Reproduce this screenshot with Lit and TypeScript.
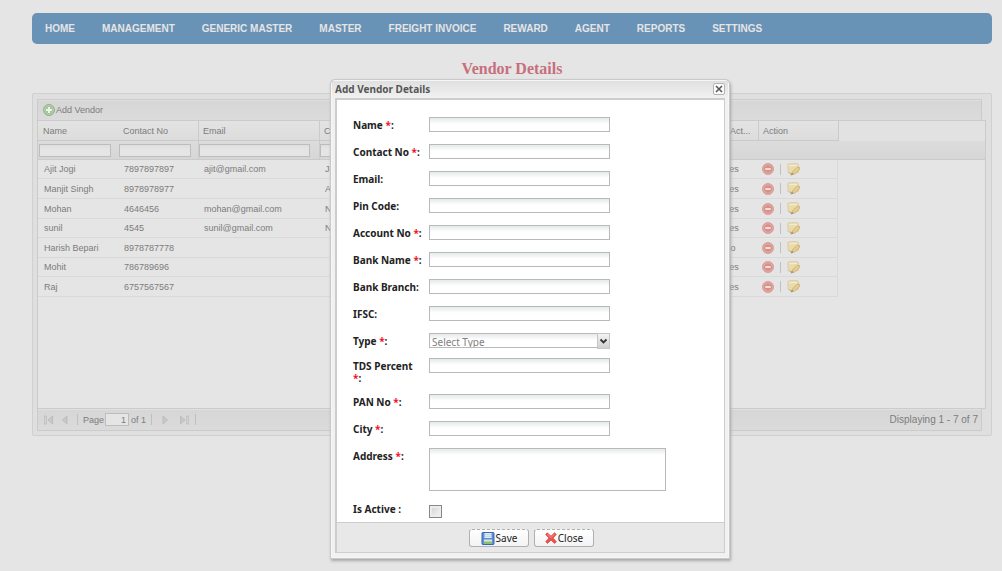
import { LitElement, html, svg, css, nothing } from "lit";
import { customElement, state } from "lit/decorators.js";

interface Vendor {
  name: string;
  contact: string;
  email: string;
  city: string;
  active: string;
}

interface Field {
  id: string;
  label: string;
  required?: boolean;
  kind?: "text" | "select" | "area" | "check";
}

const MENU = ["HOME", "MANAGEMENT", "GENERIC MASTER", "MASTER", "FREIGHT INVOICE", "REWARD", "AGENT", "REPORTS", "SETTINGS"];

const VENDORS: Vendor[] = [
  { name: "Ajit Jogi", contact: "7897897897", email: "ajit@gmail.com", city: "Ja", active: "Yes" },
  { name: "Manjit Singh", contact: "8978978977", email: "", city: "A", active: "Yes" },
  { name: "Mohan", contact: "4646456", email: "mohan@gmail.com", city: "N", active: "Yes" },
  { name: "sunil", contact: "4545", email: "sunil@gmail.com", city: "N", active: "Yes" },
  { name: "Harish Bepari", contact: "8978787778", email: "", city: "", active: "No" },
  { name: "Mohit", contact: "786789696", email: "", city: "", active: "Yes" },
  { name: "Raj", contact: "6757567567", email: "", city: "", active: "Yes" },
];

const FIELDS: Field[] = [
  { id: "name", label: "Name", required: true },
  { id: "contact", label: "Contact No", required: true },
  { id: "email", label: "Email" },
  { id: "pin", label: "Pin Code" },
  { id: "account", label: "Account No", required: true },
  { id: "bank", label: "Bank Name", required: true },
  { id: "branch", label: "Bank Branch" },
  { id: "ifsc", label: "IFSC" },
  { id: "type", label: "Type", required: true, kind: "select" },
  { id: "tds", label: "TDS Percent", required: true },
  { id: "pan", label: "PAN No", required: true },
  { id: "city", label: "City", required: true },
  { id: "address", label: "Address", required: true, kind: "area" },
  { id: "active", label: "Is Active ", kind: "check" },
];

const addIcon = html`<svg width="12" height="12" viewBox="0 0 12 12" aria-hidden="true">
  <circle cx="6" cy="6" r="5.5" fill="#a3c499" stroke="#93b28b"/>
  <circle cx="6" cy="6" r="4.4" fill="none" stroke="#b9d2b1" stroke-width=".8"/>
  <path d="M6 3v6M3 6h6" stroke="#eef2ec" stroke-width="2"/></svg>`;

const removeIcon = html`<svg width="12" height="12" viewBox="0 0 12 12" aria-hidden="true">
  <circle cx="6" cy="6" r="5.5" fill="#dc9089" stroke="#d3a39f"/>
  <circle cx="6" cy="6" r="4.3" fill="none" stroke="#e6b0aa" stroke-width=".9"/>
  <rect x="3" y="4.8" width="6" height="2.4" fill="#f2e4e3" stroke="#c97d76" stroke-width=".5"/></svg>`;

const editIcon = html`<svg width="13" height="13" viewBox="0 0 13 13" aria-hidden="true">
  <path d="M.8 1.6 2 .8 10.4.6 11.4 1.6 11.4 9.4 6 10.6 1.2 9.6z" fill="#e8dcae" stroke="#ddcaa2" stroke-width=".9"/>
  <path d="M2.2 2.6 10 2.4" stroke="#f0ebd4" stroke-width="1.4"/>
  <path d="M1 9.4 4.4 10 4.2 11.6z" fill="#c9b386"/>
  <path d="M5 10.8 6 8.2 10.2 4.4 12.6 4.6 12.3 6.8 7.4 11.2z" fill="#e6d084" stroke="#cfae80" stroke-width=".9"/>
  <path d="M3.6 12.6 4.8 9.8 6.6 11.4z" fill="#9c8b74"/></svg>`;

const pagerIcon = (triangle: string, bar?: number) => html`<svg width="10" height="10" viewBox="0 0 10 10" aria-hidden="true">
  ${bar === undefined ? nothing : svg`<rect x=${bar} y="1" width="2" height="8" fill="#d4d4d4" stroke="#bababa" stroke-width=".7"/>`}
  <path d=${triangle} fill="#c8c8c8" stroke="#b4b4b4" stroke-width=".7"/></svg>`;

const saveIcon = html`<svg width="14" height="13" viewBox="0 0 14 13" aria-hidden="true">
  <rect x="1" y=".5" width="12" height="12" rx=".8" fill="#5b8fd6" stroke="#3a66ad"/>
  <rect x="3.5" y="1" width="7" height="5" fill="#e4edf9"/>
  <path d="M4 2.5h6M4 4.3h6" stroke="#b6c8e4" stroke-width=".7"/>
  <rect x="3" y="7.5" width="8" height="4.5" fill="#d8e8d0"/>
  <rect x="3" y="9.5" width="8" height="2.5" fill="#8cc07a"/></svg>`;

const crossIcon = html`<svg width="12" height="12" viewBox="0 0 12 12" aria-hidden="true">
  <path d="M2.2.8 6 4.2 9.6.8 11.3 2.4 8 6.1 11.4 9.8 9.6 11.4 6 8 2.6 11.4.7 9.7 4 6.1.7 2.6z" fill="#ee5350" stroke="#d93a3a" stroke-width=".7"/>
  <path d="M2.4 2.2 6 5.5 9.4 2.3" fill="none" stroke="#f79390" stroke-width=".9"/></svg>`;

@customElement("app-root")
export class AppRoot extends LitElement {
  @state() private open = true;

  static styles = css`
    :host {
      display: block;
      min-height: 100vh;
      box-sizing: border-box;
      padding: 13px 10px 20px 32px;
      background: #e5e5e5;
      color: #7c7c7c;
      font: 9px/12px "Liberation Sans", Arial, sans-serif;
    }
    *, *::before { box-sizing: border-box; }
    input, select, textarea, button { font: inherit; color: inherit; margin: 0; border-radius: 0; }
    button { border: 0; padding: 0; background: none; cursor: pointer; }
    svg { display: block; flex: none; }

    .menu {
      display: flex;
      align-items: center;
      gap: 27px;
      height: 31px;
      padding-left: 13px;
      border-radius: 5px;
      background: #6892b6;
    }
    .menu a { color: #e5e5e5; font-weight: bold; font-size: 10px; text-decoration: none; white-space: nowrap; }
    h1 {
      margin: 14px 0;
      text-align: center;
      color: #c7707d;
      font: bold 16px/21px "Liberation Serif", "Times New Roman", serif;
    }

    .panel { padding: 5px 5px 4px 4px; border: 1px solid #d0d0d0; border-radius: 2px; background: #dfdfdf; }
    .bar {
      display: flex;
      align-items: center;
      margin-right: 4px;
      padding: 0 5px;
      border: 1px solid #cbcbcb;
      background: linear-gradient(#d6d6d6, #dbdbdb);
      box-shadow: inset 0 1px #e0e0e0;
    }
    .tools { height: 21px; border-bottom: 0; }
    .tools button { display: flex; align-items: center; gap: 1px; }
    .grid { min-height: 289px; border: 1px solid #cbcbcb; background: #e5e5e5; }
    .vendors { width: 100%; border-spacing: 0; table-layout: fixed; }
    .c-name, .c-contact, .c-action { width: 80px; }
    .c-email { width: 121px; }
    .c-city { width: 399px; }
    .c-active { width: 40px; }
    th, td { padding: 0; text-align: left; font-weight: normal; white-space: nowrap; overflow: hidden; }
    .titles th { height: 20px; padding-left: 5px; border-bottom: 1px solid #cbcbcb; background: linear-gradient(#e3e3e3, #dcdcdc); }
    .titles th.edge { border-left: 1px solid #cbcbcb; padding-left: 4px; }
    .titles th.rest { border-bottom: 0; background: #e2e2e2; }
    .filters { background: linear-gradient(#dcdcdc, #d6d6d6); }
    .filters td { height: 19px; padding-left: 1px; border-bottom: 1px solid #cbcbcb; }
    .filters td.edge { border-left: 1px solid #cbcbcb; padding-left: 0; }
    .filters input {
      display: block;
      width: 72px;
      height: 13px;
      padding: 0 2px;
      border: 1px solid #bdbdbd;
      background: linear-gradient(#dedede, #e5e5e5 4px);
    }
    .filters .wide { width: 111px; }
    .rows td { height: 20px; padding-left: 6px; border-bottom: 1px solid #d9d9d9; }
    .rows tr:nth-child(5n + 1) td, .rows tr:nth-child(4) td { height: 19px; }
    .rows .last { border-right: 1px solid #d9d9d9; padding-left: 4px; }
    .rows .rest { border: 0; }
    .actions { display: flex; align-items: center; gap: 6px; }
    .split { width: 1px; height: 11px; background: #c0c0c0; }

    .pager { height: 22px; border-top: 0; justify-content: space-between; padding: 0 3px 0 6px; }
    .pages { display: flex; align-items: center; }
    .pages button { width: 18px; }
    .pages .split { margin: 0 5px 0 -3px; }
    .pages .middle { margin: 0 10px 0 5px; }
    .pageno { width: 24px; height: 13px; margin: 0 2px 0 1px; padding: 0 2px; border: 1px solid #bdbdbd; background: #e5e5e5; text-align: right; }
    .count { font-size: 10px; }

    .window {
      position: absolute;
      top: 80px;
      left: 331px;
      width: 398px;
      padding: 0 3px 4px;
      border: 1px solid #f6f6f6;
      border-radius: 4px 4px 0 0;
      background: #f1f1f1;
      box-shadow: 0 0 0 1px #c9c9c9, 1px 2px 3px 1px #a8a8a8;
      color: #222;
      font: 10px/12px "Noto Sans", Tahoma, sans-serif;
    }
    .caption {
      display: flex;
      align-items: center;
      justify-content: space-between;
      height: 17px;
      margin: 0 -3px;
      padding: 0 3px 2px;
      background: linear-gradient(#e0e0e0, #f1f1f1);
    }
    .caption h2 { margin: 0; font: bold 10px/14px "Noto Sans", Tahoma, sans-serif; color: #555; }
    .close { display: flex; width: 12px; height: 12px; border: 1px solid #b4b4b4; border-radius: 2px; background: #fafafa; }
    .body { border: 2px solid #cdcdcd; border-width: 2px 1px 1px 2px; background: #fff; }
    form { display: flex; flex-direction: column; }
    .fields { display: flex; flex-direction: column; gap: 10px; padding: 17px 16px 4px; }
    .row { display: grid; grid-template-columns: 76px 1fr; align-items: start; min-height: 17px; }
    .row.select { min-height: 15px; }
    .row label { padding: 2px 6px 0 0; font-weight: bold; }
    .star { color: #f4102a; }
    .box {
      width: 181px;
      height: 15px;
      padding: 0 2px;
      border: 1px solid #b9b9b9;
      background: linear-gradient(#e6eaea, #fff 6px);
    }
    .row textarea.box { display: block; width: 237px; height: 43px; resize: none; }
    .drop { display: grid; width: 181px; height: 15px; }
    .drop > * { grid-area: 1 / 1; }
    .drop select { appearance: none; padding-top: 2px; color: #808080; line-height: 13px; }
    .arrow { justify-self: end; width: 13px; height: 16px; background: linear-gradient(#f4f4f4, #cfcfcf); border: 1px solid #c6c6c6; pointer-events: none; }
    .tick {
      appearance: none;
      width: 13px;
      height: 13px;
      margin-top: 4px;
      border: 1px solid #888;
      background: linear-gradient(135deg, #d0d0d0, #f8f8f8);
      box-shadow: inset 0 0 0 2px #ececec;
    }
    .tick:checked { background: #7d9ac0; }
    .foot { display: flex; justify-content: center; gap: 5px; padding: 6px 0 5px 2px; border-top: 1px solid #cdcdcd; background: #e8e8e8; }
    .foot button {
      display: flex;
      align-items: center;
      justify-content: center;
      width: 60px;
      height: 18px;
      border: 1px solid #b0b0b0;
      border-top-style: dashed;
      border-radius: 3px;
      background: linear-gradient(#fff, #f3f3f3);
    }
    .foot svg { margin-right: 1px; }
  `;

  private control(f: Field) {
    switch (f.kind) {
      case "select":
        return html`<div class="drop">
          <select class="box" id=${f.id}><option>Select Type</option></select>
          <span class="arrow"><svg width="11" height="14" viewBox="0 0 11 14" aria-hidden="true">
            <path d="M2.5 5.5 5.5 8.5 8.5 5.5" fill="none" stroke="#333" stroke-width="1.8"/></svg></span>
        </div>`;
      case "area":
        return html`<textarea class="box" id=${f.id}></textarea>`;
      case "check":
        return html`<input class="tick" type="checkbox" id=${f.id}>`;
      default:
        return html`<input class="box" type="text" id=${f.id}>`;
    }
  }

  private dialog() {
    return html`<section class="window" role="dialog" aria-labelledby="caption">
      <div class="caption">
        <h2 id="caption">Add Vendor Details</h2>
        <button class="close" aria-label="Close window" @click=${() => (this.open = false)}>
          <svg width="10" height="10" viewBox="0 0 10 10"><path d="M2 2l6 6M8 2 2 8" stroke="#555" stroke-width="1.5"/></svg>
        </button>
      </div>
      <div class="body">
        <form @submit=${(e: Event) => e.preventDefault()}>
          <div class="fields">
            ${FIELDS.map((f) => html`<div class="row ${f.kind ?? "text"}">
              <label for=${f.id}>${f.label}${f.required ? html` <span class="star">*</span>` : nothing}:</label>
              ${this.control(f)}
            </div>`)}
          </div>
          <div class="foot">
            <button type="submit">${saveIcon}Save</button>
            <button type="button" @click=${() => (this.open = false)}>${crossIcon}Close</button>
          </div>
        </form>
      </div>
    </section>`;
  }

  render() {
    return html`
      <nav class="menu">${MENU.map((m) => html`<a href="#">${m}</a>`)}</nav>
      <h1>Vendor Details</h1>
      <main class="panel">
        <div class="bar tools"><button @click=${() => (this.open = true)}>${addIcon}Add Vendor</button></div>
        <div class="grid">
          <table class="vendors">
            <colgroup>
              <col class="c-name"><col class="c-contact"><col class="c-email"><col class="c-city"><col class="c-active"><col class="c-action"><col>
            </colgroup>
            <thead>
              <tr class="titles">
                <th>Name</th><th>Contact No</th><th class="edge">Email</th><th class="edge">C</th>
                <th>IsAct...</th><th class="edge">Action</th><th class="edge rest"></th>
              </tr>
              <tr class="filters">
                <td><input aria-label="Filter by name"></td>
                <td><input aria-label="Filter by contact"></td>
                <td class="edge"><input class="wide" aria-label="Filter by email"></td>
                <td class="edge"><input aria-label="Filter"></td>
                <td></td><td></td><td></td>
              </tr>
            </thead>
            <tbody class="rows">
              ${VENDORS.map((v) => html`<tr>
                <td>${v.name}</td><td>${v.contact}</td><td>${v.email}</td><td>${v.city}</td><td>${v.active}</td>
                <td class="last"><div class="actions">
                  <button aria-label="Delete ${v.name}">${removeIcon}</button><span class="split"></span>
                  <button aria-label="Edit ${v.name}">${editIcon}</button>
                </div></td>
                <td class="rest"></td>
              </tr>`)}
            </tbody>
          </table>
        </div>
        <div class="bar pager">
          <div class="pages">
            <button aria-label="First page">${pagerIcon("M8.6 1v8L4 5z", 0.5)}</button>
            <button aria-label="Previous page">${pagerIcon("M5 1v8L.5 5z")}</button>
            <span class="split"></span>
            <label for="pageno">Page</label>
            <input class="pageno" id="pageno" value="1">
            <span>of 1</span>
            <span class="split middle"></span>
            <button aria-label="Next page">${pagerIcon("M1 1v8L5.5 5z")}</button>
            <button aria-label="Last page">${pagerIcon("M.5 1v8L5 5z", 6.5)}</button>
            <span class="split"></span>
          </div>
          <span class="count">Displaying 1 - 7 of 7</span>
        </div>
      </main>
      ${this.open ? this.dialog() : nothing}
    `;
  }
}
